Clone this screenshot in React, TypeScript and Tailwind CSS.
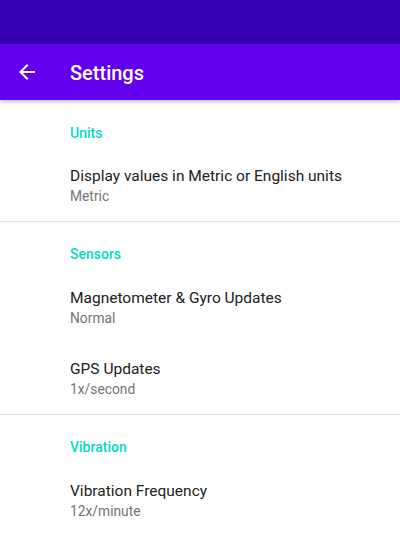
import React from "react";

function Category({ label, first }: { label: string; first?: boolean }) {
  return (
    <div
      className={
        first
          ? "pl-[70px] pt-[23px] text-[14px] leading-[20px] font-medium text-[#03DAC5]"
          : "pl-[70px] pt-[22px] pb-[1px] text-[14px] leading-[20px] font-medium text-[#03DAC5]"
      }
    >
      {label}
    </div>
  );
}

function Item({ title, summary }: { title: string; summary: string }) {
  return (
    <div className="pl-[70px] pt-[21px] pb-[10px]">
      <div className="text-[15.5px] leading-[24px] text-[#212121]">{title}</div>
      <div className="text-[13.8px] leading-[16px] text-[#757575]">{summary}</div>
    </div>
  );
}

export default function App() {
  return (
    <div
      className="w-[400px] h-[537px] bg-white overflow-hidden flex flex-col"
      style={{ fontFamily: "Roboto, 'Noto Sans', sans-serif" }}
    >
      <div className="h-[44px] bg-[#3700B3] shrink-0" />
      <div className="h-[56px] bg-[#6200EE] shrink-0 flex items-center relative z-10 shadow-[0_2px_4px_rgba(0,0,0,0.25)]">
        <div className="w-[70px] flex items-center pl-[15px]">
          <svg width="24" height="24" viewBox="0 0 24 24" fill="white">
            <path d="M20 11H7.83l5.59-5.59L12 4l-8 8 8 8 1.41-1.41L7.83 13H20v-2z" />
          </svg>
        </div>
        <div className="text-white text-[20px] font-medium leading-[24px] pt-[2px]">Settings</div>
      </div>
      <div className="flex flex-col">
        <Category label="Units" first />
        <Item title="Display values in Metric or English units" summary="Metric" />
        <div className="mt-[7px] h-px bg-[#e0e0e0]" />
        <Category label="Sensors" />
        <Item title="Magnetometer & Gyro Updates" summary="Normal" />
        <Item title="GPS Updates" summary="1x/second" />
        <div className="mt-[7px] h-px bg-[#e0e0e0]" />
        <Category label="Vibration" />
        <Item title="Vibration Frequency" summary="12x/minute" />
      </div>
    </div>
  );
}
